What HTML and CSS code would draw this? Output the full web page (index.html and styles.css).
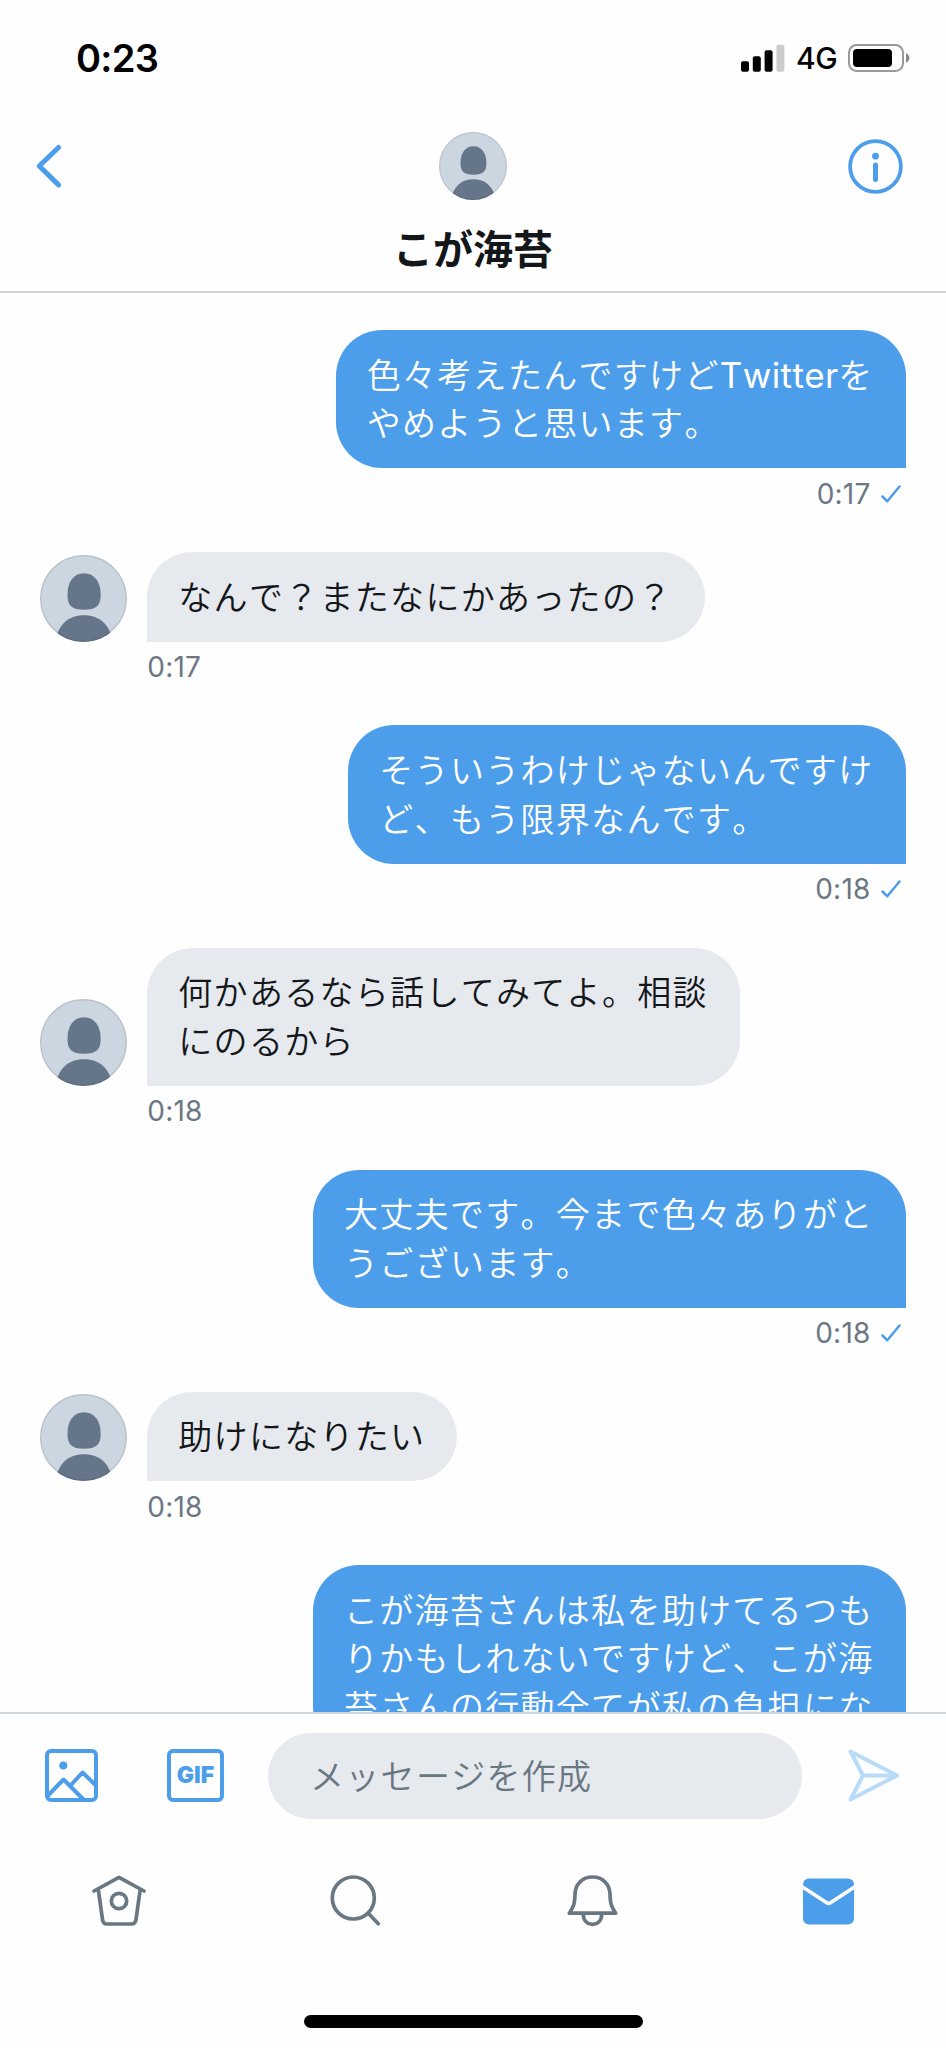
FILE: index.html
```html
<!DOCTYPE html>
<html lang="ja">
<head>
<meta charset="utf-8">
<title>こが海苔</title>
<link rel="stylesheet" href="styles.css">
</head>
<body>
<svg class="defs" width="0" height="0" aria-hidden="true">
  <symbol id="avatar" viewBox="0 0 87 87">
    <clipPath id="round"><circle cx="43.5" cy="43.5" r="43.5"/></clipPath>
    <g clip-path="url(#round)">
      <rect width="87" height="87" fill="#ccd6e0"/>
      <path d="M44 18.3C54.500 18.300 60.700 27 60.700 40C60.700 50.500 56.500 54.700 44 54.700C31.500 54.700 27.500 50.500 27.500 40C27.500 27 33.500 18.300 44 18.300Z" fill="#66768a"/>
      <path d="M16 83C20 67 31 60.300 44 60.300C57 60.300 68 67 72 83V88H16Z" fill="#66768a"/>
    </g>
    <circle cx="43.5" cy="43.5" r="42.8" fill="none" stroke="#000" stroke-opacity=".09" stroke-width="1.5"/>
  </symbol>
  <symbol id="check" viewBox="0 0 20 18">
    <path d="M1.500 11.500L6.300 16.300L18.500 1.500" fill="none" stroke="#4c9eeb" stroke-width="2.500" stroke-linecap="round" stroke-linejoin="round"/>
  </symbol>
</svg>
<div class="screen">
  <div class="status">
    <span class="clock">0:23</span>
    <div class="indicators">
      <svg width="44" height="28" viewBox="0 0 44 28">
        <rect x="0" y="17.300" width="8" height="10.500" rx="2"/>
        <rect x="11.800" y="12.300" width="8" height="15.500" rx="2"/>
        <rect x="23.600" y="6.300" width="8" height="21.500" rx="2"/>
        <rect x="35.400" y="0.700" width="8" height="27.100" rx="2" fill="#ccc"/>
      </svg>
      <span class="network">4G</span>
      <svg width="62" height="28" viewBox="0 0 62 28">
        <rect x="1" y="1" width="54" height="26" rx="7.500" fill="none" stroke="#999" stroke-width="2"/>
        <rect x="5" y="5" width="39" height="18" rx="4"/>
        <path d="M58 9.200C62.500 11 62.500 17 58 18.800Z" fill="#888"/>
      </svg>
    </div>
  </div>

  <header class="header">
    <svg class="back" width="26" height="44" viewBox="0 0 26 44"><path d="M22.500 3.500L3.300 22L22.500 40.900" fill="none" stroke="#4c9eeb" stroke-width="5" stroke-linecap="round" stroke-linejoin="round"/></svg>
    <svg class="header-avatar" width="68" height="68"><use href="#avatar"/></svg>
    <svg class="info" width="55" height="55" viewBox="0 0 55 55"><circle cx="27.500" cy="27.500" r="25.400" fill="none" stroke="#4c9eeb" stroke-width="3.800"/><circle cx="27.500" cy="17.200" r="3.400" fill="#4c9eeb"/><path d="M27.500 26V40.500" stroke="#4c9eeb" stroke-width="5" stroke-linecap="round"/></svg>
    <h1 class="title">こが海苔</h1>
  </header>

  <main class="thread">
    <div class="message sent">
      <p class="bubble">色々考えたんですけど<span class="latin">Twitter</span>を<br>やめようと思います。</p>
      <div class="meta"><span>0:17</span><svg width="20" height="18"><use href="#check"/></svg></div>
    </div>
    <div class="message received">
      <svg class="avatar" width="87" height="87"><use href="#avatar"/></svg>
      <p class="bubble">なんで？またなにかあったの？</p>
      <div class="meta"><span>0:17</span></div>
    </div>
    <div class="message sent">
      <p class="bubble">そういうわけじゃないんですけ<br>ど、もう限界なんです。</p>
      <div class="meta"><span>0:18</span><svg width="20" height="18"><use href="#check"/></svg></div>
    </div>
    <div class="message received">
      <svg class="avatar" width="87" height="87"><use href="#avatar"/></svg>
      <p class="bubble">何かあるなら話してみてよ。相談<br>にのるから</p>
      <div class="meta"><span>0:18</span></div>
    </div>
    <div class="message sent">
      <p class="bubble">大丈夫です。今まで色々ありがと<br>うございます。</p>
      <div class="meta"><span>0:18</span><svg width="20" height="18"><use href="#check"/></svg></div>
    </div>
    <div class="message received">
      <svg class="avatar" width="87" height="87"><use href="#avatar"/></svg>
      <p class="bubble">助けになりたい</p>
      <div class="meta"><span>0:18</span></div>
    </div>
    <div class="message sent">
      <p class="bubble">こが海苔さんは私を助けてるつも<br>りかもしれないですけど、こが海<br>苔さんの行動全てが私の負担にな</p>
    </div>
  </main>

  <div class="composer">
    <svg class="photo" width="53" height="53" viewBox="0 0 53 53" fill="none" stroke="#4c9eeb" stroke-width="4">
      <rect x="2" y="2" width="49" height="49" rx="4"/>
      <circle cx="18.300" cy="16.500" r="4" fill="#4c9eeb" stroke="none"/>
      <path d="M2.500 47L18.500 30.500L39 51M26 36L37.500 23.500L51 36.500" stroke-linejoin="round"/>
    </svg>
    <span class="gif">GIF</span>
    <div class="field">メッセージを作成</div>
    <svg class="send" width="52" height="53" viewBox="0 0 52 53" fill="none" stroke="#b8dbf7" stroke-width="4" stroke-linejoin="round">
      <path d="M2.500 2.500L49 26.500L2.500 50.500L15 26.500ZM15 26.500H48"/>
    </svg>
  </div>

  <nav class="tabs">
    <svg width="56" height="54" viewBox="0 0 56 54" fill="none" stroke="#697783" stroke-width="3.700" stroke-linecap="round" stroke-linejoin="round">
      <path d="M3 18L28 4.300L53 18M7.300 16.500L11.500 46.500Q12 51 16 51H40.500Q44.500 51 45 46.500L49.200 16.500"/>
      <circle cx="28" cy="28" r="7.700"/>
    </svg>
    <svg width="56" height="54" viewBox="0 0 56 54" fill="none" stroke="#697783" stroke-width="3.700" stroke-linecap="round">
      <circle cx="26.300" cy="25" r="21"/><path d="M42 41L51.300 50.700"/>
    </svg>
    <svg width="56" height="54" viewBox="0 0 56 54" fill="none" stroke="#697783" stroke-width="3.700" stroke-linejoin="round">
      <path d="M28.500 4C18 4 11.300 11.500 11 21C10.800 31 9.500 34 5.300 40.200H51.700C47.500 34 46.200 31 46 21C45.700 11.500 39 4 28.500 4ZM19.300 41C19.300 47.500 23 51.300 28.500 51.300C34 51.300 37.700 47.500 37.700 41"/>
    </svg>
    <svg width="56" height="54" viewBox="0 0 56 54">
      <rect x="3" y="5.500" width="51" height="46" rx="6" fill="#4c9eeb"/><path d="M1.800 13.500L26.800 29.800Q28.600 31 30.400 29.800L55.300 13.500" fill="none" stroke="#fefefe" stroke-width="3.600"/>
    </svg>
  </nav>
  <div class="home-indicator"></div>
</div>
</body>
</html>
```
FILE: styles.css
```css
* {
  box-sizing: border-box;
}

body {
  margin: 0;
  background: #fefefe;
  font-family: "Noto Sans CJK JP", sans-serif;
  font-kerning: none;
  color: #14171a;
}

svg {
  display: block;
  flex: none;
}

.defs {
  position: absolute;
}

.screen {
  display: flex;
  flex-direction: column;
  width: 946px;
  height: 2048px;
  overflow: hidden;
}

.status {
  flex: none;
  display: flex;
  justify-content: space-between;
  align-items: center;
  height: 116px;
  padding: 0 36px 0 76px;
  font-family: Inter, sans-serif;
  color: #000;
}

.clock {
  font-size: 38px;
  font-weight: 600;
  letter-spacing: -0.7px;
}

.indicators {
  display: flex;
  align-items: center;
}

.network {
  width: 63px;
  padding-left: 11px;
  font-size: 30px;
  font-weight: 450;
  line-height: 28px;
  letter-spacing: -0.5px;
}

.header {
  flex: none;
  display: grid;
  grid-template-columns: 1fr 68px 1fr;
  grid-template-rows: 68px 1fr;
  align-items: center;
  height: 177px;
  padding: 16px 43px 0 36px;
  border-bottom: 2px solid #cfd3d6;
}

.header-avatar {
  margin-left: 3px;
}

.info {
  justify-self: end;
}

.title {
  grid-column: 1 / -1;
  justify-self: center;
  margin: 2px 0 0;
  padding-left: 7px;
  font-size: 40px;
  font-weight: 700;
  line-height: 60px;
}

.thread {
  flex: none;
  display: flex;
  flex-direction: column;
  height: 1419px;
  padding: 37px 40.5px 0 40px;
  overflow: hidden;
}

.message {
  flex: none;
  display: grid;
}

.sent {
  justify-items: end;
}

.received {
  grid-template-columns: 87px 1fr;
  column-gap: 20.3px;
  justify-items: start;
  align-items: end;
}

.received .meta {
  grid-column: 2;
}

.bubble {
  margin: 0;
  padding: 19.5px 32px 21.3px 31px;
  border-radius: 46px;
  font-size: 34px;
  font-weight: 350;
  line-height: 48.7px;
  letter-spacing: 1.3px;
  white-space: nowrap;
}

.sent .bubble {
  border-bottom-right-radius: 0;
  background: #4c9eeb;
  color: #fff;
}

.received .bubble {
  border-bottom-left-radius: 0;
  background: #e6e9ee;
}

.latin {
  display: inline-block;
  width: 118.5px;
  font-family: Inter, sans-serif;
  font-size: 35px;
  font-weight: 400;
  line-height: 1;
  letter-spacing: 0.4px;
}

.meta {
  display: flex;
  align-items: center;
  gap: 10px;
  height: 83.9px;
  padding: 0 5px 33px 0;
  font-family: Inter, sans-serif;
  font-size: 28px;
  letter-spacing: 0.2px;
  color: #6b7785;
}

.composer {
  flex: none;
  display: flex;
  align-items: center;
  height: 128px;
  padding: 0 46px 3px 45px;
  border-top: 2px solid #d0d4dc;
}

.gif {
  width: 57px;
  height: 53px;
  margin: 0 44px 0 69px;
  border: 4px solid #4c9eeb;
  border-radius: 6px;
  font-family: Inter, sans-serif;
  font-size: 23px;
  font-weight: 900;
  line-height: 44px;
  text-align: center;
  color: #4c9eeb;
}

.field {
  flex: 1;
  height: 86px;
  margin-right: 46px;
  padding-left: 42px;
  border-radius: 43px;
  background: #e6e9ee;
  font-size: 34px;
  font-weight: 350;
  line-height: 83px;
  letter-spacing: 1.3px;
  color: #697783;
}

.tabs {
  flex: none;
  display: grid;
  grid-template-columns: repeat(4, 1fr);
  justify-items: center;
  padding: 33px 0 0 1px;
}

.home-indicator {
  flex: none;
  align-self: center;
  width: 339px;
  height: 13px;
  margin-top: 88px;
  border-radius: 7px;
  background: #000;
}
```
